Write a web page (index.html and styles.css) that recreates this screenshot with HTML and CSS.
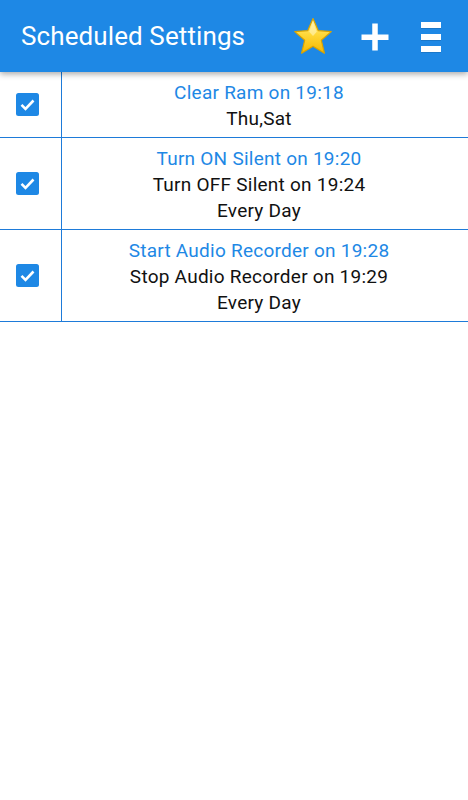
FILE: index.html
```html
<!DOCTYPE html>
<html>
<head>
<meta charset="utf-8">
<link rel="stylesheet" href="styles.css">
</head>
<body>
<header class="bar">
  <h1 class="title">Scheduled Settings</h1>
  <div class="actions">
    <svg class="star" width="42" height="42" viewBox="0 0 42 42">
      <defs>
        <linearGradient id="sg" x1="0" y1="0" x2="0" y2="1">
          <stop offset="0" stop-color="#fff3a6"/>
          <stop offset="0.45" stop-color="#ffd83a"/>
          <stop offset="1" stop-color="#f5b800"/>
        </linearGradient>
      </defs>
      <path d="M21 2.5 L26.2 14.6 L39.3 15.6 L29.3 24.2 L32.4 37.2 L21 30.2 L9.6 37.2 L12.7 24.2 L2.7 15.6 L15.8 14.6 Z" fill="url(#sg)" stroke="#d9a300" stroke-width="1.2" stroke-linejoin="round"/>
      <path d="M21 6 L24.8 15.8 L21 20 L17.2 15.8 Z" fill="#fff7c8" opacity="0.55"/>
    </svg>
    <svg class="plus" width="28" height="28" viewBox="0 0 28 28">
      <rect x="0.5" y="11.5" width="27" height="5.5" fill="#fff"/>
      <rect x="11.25" y="0.5" width="5.5" height="27" fill="#fff"/>
    </svg>
    <div class="menu">
      <span></span><span></span><span></span>
    </div>
  </div>
</header>
<main class="list">
  <div class="row">
    <div class="check"><svg width="23" height="23" viewBox="0 0 23 23"><rect width="23" height="23" rx="2.5" fill="#1e88e5"/><path d="M5.5 11.8 L9.5 15.8 L17.5 7.5" fill="none" stroke="#fff" stroke-width="2.6"/></svg></div>
    <div class="info">
      <div class="action">Clear Ram on 19:18</div>
      <div class="detail">Thu,Sat</div>
    </div>
  </div>
  <div class="row">
    <div class="check"><svg width="23" height="23" viewBox="0 0 23 23"><rect width="23" height="23" rx="2.5" fill="#1e88e5"/><path d="M5.5 11.8 L9.5 15.8 L17.5 7.5" fill="none" stroke="#fff" stroke-width="2.6"/></svg></div>
    <div class="info">
      <div class="action">Turn ON Silent on 19:20</div>
      <div class="detail">Turn OFF Silent on 19:24</div>
      <div class="detail">Every Day</div>
    </div>
  </div>
  <div class="row">
    <div class="check"><svg width="23" height="23" viewBox="0 0 23 23"><rect width="23" height="23" rx="2.5" fill="#1e88e5"/><path d="M5.5 11.8 L9.5 15.8 L17.5 7.5" fill="none" stroke="#fff" stroke-width="2.6"/></svg></div>
    <div class="info">
      <div class="action">Start Audio Recorder on 19:28</div>
      <div class="detail">Stop Audio Recorder on 19:29</div>
      <div class="detail">Every Day</div>
    </div>
  </div>
</main>
</body>
</html>
```
FILE: styles.css
```css
html, body {
  margin: 0;
  padding: 0;
  background: #ffffff;
  font-family: Roboto, "Noto Sans", sans-serif;
}
.bar {
  height: 72px;
  background: #1e88e5;
  display: flex;
  align-items: center;
  justify-content: space-between;
  padding-left: 21px;
  position: relative;
  z-index: 2;
  box-shadow: 0 2px 6px rgba(0, 0, 0, 0.35);
}
.title {
  margin: 0;
  color: #ffffff;
  font-size: 26px;
  font-weight: 400;
  letter-spacing: 0.1px;
}
.actions {
  display: flex;
  align-items: center;
  height: 72px;
}
.star {
  margin-right: 27px;
  margin-top: 1px;
}
.plus {
  margin-right: 32px;
  margin-top: 1px;
}
.menu {
  width: 20px;
  display: flex;
  flex-direction: column;
  gap: 6px;
  margin-right: 27px;
  margin-top: 1px;
}
.menu span {
  display: block;
  height: 6px;
  background: #ffffff;
  box-shadow: 0 1px 0 rgba(0, 0, 0, 0.12);
}
.list {
  display: flex;
  flex-direction: column;
}
.row {
  display: flex;
  border-bottom: 1px solid #1e7bd9;
}
.check {
  width: 62px;
  border-right: 1px solid #1e7bd9;
  display: flex;
  align-items: center;
  padding-left: 16px;
  box-sizing: border-box;
}
.check svg {
  display: block;
}
.info {
  flex: 1;
  padding: 8px 12px 5px 0;
  text-align: center;
  line-height: 26px;
  font-size: 19px;
  letter-spacing: 0.25px;
}
.action {
  color: #1e88e5;
}
.detail {
  color: #111111;
}
```
